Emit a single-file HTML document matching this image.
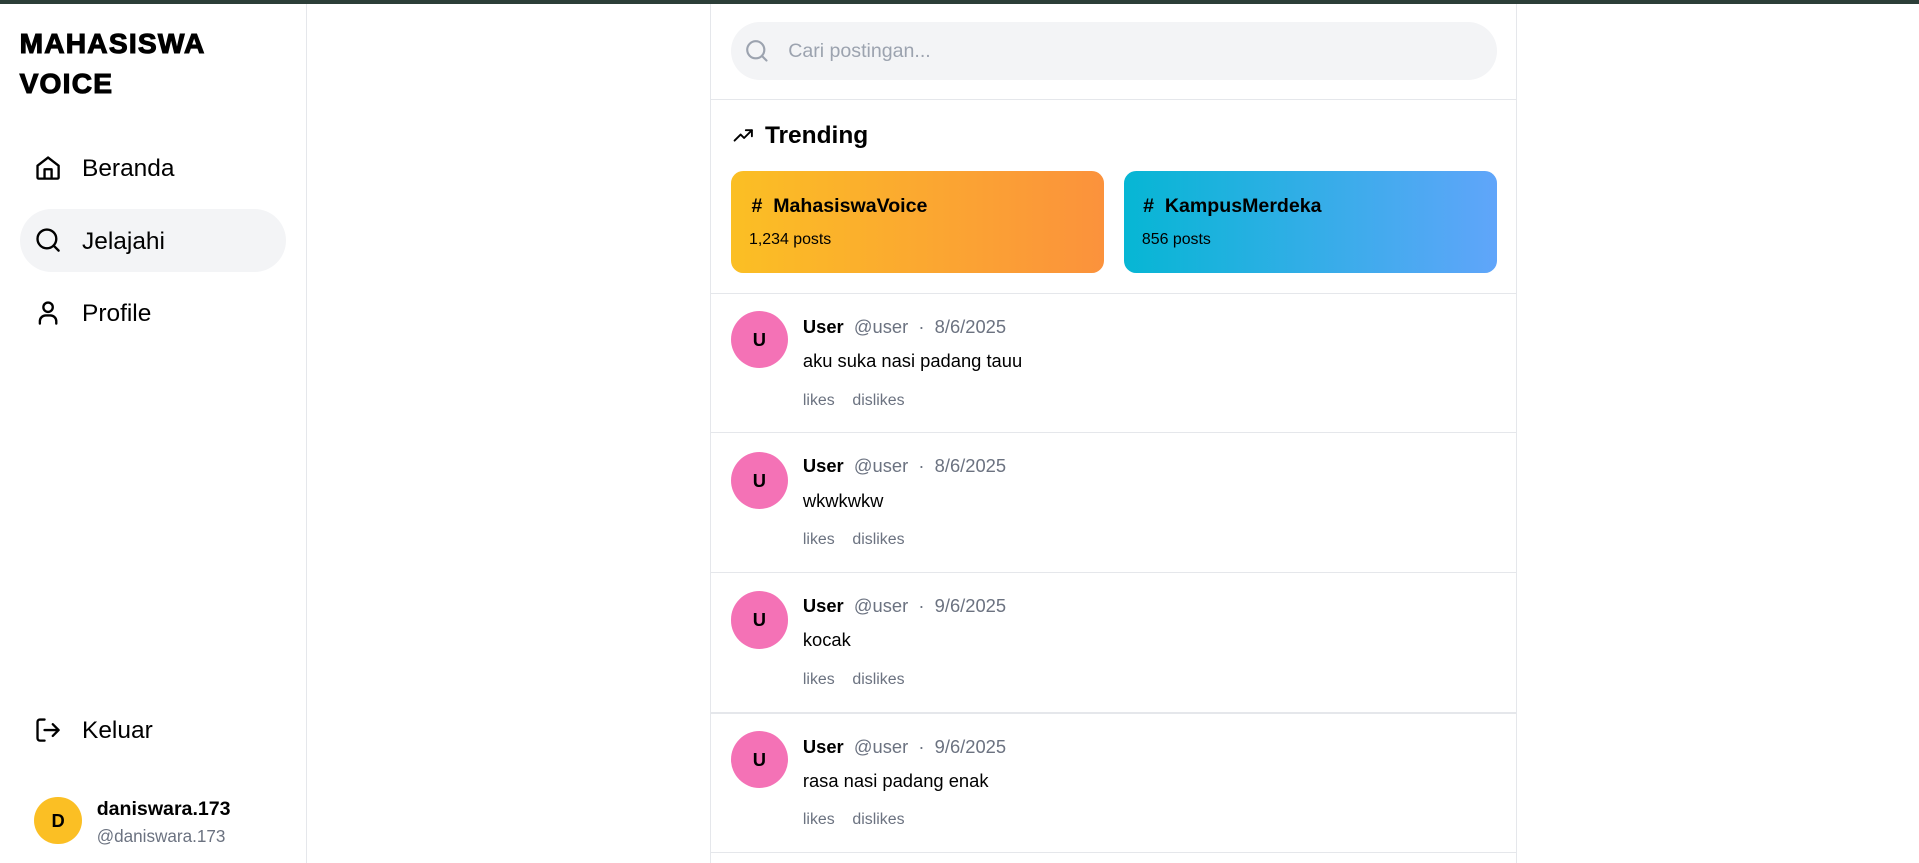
<!DOCTYPE html>
<html><head><meta charset="utf-8"><style>
html,body{margin:0;padding:0;background:#fff;overflow:hidden}
body{width:1919px;height:863px;position:relative;font-family:"Liberation Sans","DejaVu Sans",sans-serif;color:#000}
#z{zoom:1.2239;width:1568px;height:705px;position:relative}
.a{position:absolute;white-space:nowrap}
.top{position:absolute;left:0;top:0;width:1568px;height:3px;background:#2c3e38}
.side{position:absolute;left:0;top:3px;width:250px;height:702px;border-right:1px solid #e5e7eb}
.logo{left:16px;top:20px;font-size:23px;font-weight:900;line-height:32px;letter-spacing:1px;-webkit-text-stroke:0.9px #000}
.nav{font-size:20px}
.main{position:absolute;left:580px;top:3px;width:658px;height:702px;border-left:1px solid #e5e7eb;border-right:1px solid #e5e7eb}
.hr{position:absolute;left:580px;width:659px;height:1px;background:#e5e7eb}
.card{position:absolute;top:140px;width:305px;height:83px;border-radius:10px}
.av{position:absolute;left:597px;width:47px;height:47px;border-radius:50%;background:#f472b6;font-weight:bold;font-size:15px;text-align:center;line-height:47px}
.gray{color:#6b7280}
</style></head><body><div id="z">
<div class="top"></div>
<div class="side"></div>
<div class="a logo">MAHASISWA<br>VOICE</div>
<div class="a" style="left:16px;top:171px;width:218px;height:51px;border-radius:26px;background:#f3f4f6"></div>
<svg class="a" style="left:28px;top:126px" width="23" height="23" viewBox="0 0 24 24" fill="none" stroke="#000" stroke-width="2" stroke-linejoin="round"><path d="M3 10L12 3l9 7v10a1 1 0 0 1-1 1H4a1 1 0 0 1-1-1z"/><path d="M9 21v-8h6v8"/></svg>
<div class="a nav" style="left:67px;top:127px">Beranda</div>
<svg class="a" style="left:28px;top:185px" width="23" height="23" viewBox="0 0 24 24" fill="none" stroke="#000" stroke-width="2" stroke-linecap="round"><circle cx="11" cy="11" r="8"/><path d="M21 21l-4.3-4.3"/></svg>
<div class="a nav" style="left:67px;top:186px">Jelajahi</div>
<svg class="a" style="left:28px;top:244px" width="23" height="23" viewBox="0 0 24 24" fill="none" stroke="#000" stroke-width="2" stroke-linecap="round"><circle cx="12" cy="7" r="4"/><path d="M5 21v-2a5 5 0 0 1 5-5h4a5 5 0 0 1 5 5v2"/></svg>
<div class="a nav" style="left:67px;top:245px">Profile</div>
<svg class="a" style="left:28px;top:585px" width="23" height="23" viewBox="0 0 24 24" fill="none" stroke="#000" stroke-width="2" stroke-linecap="round" stroke-linejoin="round"><path d="M9 21H5a2 2 0 0 1-2-2V5a2 2 0 0 1 2-2h4"/><path d="M16 17l5-5-5-5M21 12H9"/></svg>
<div class="a nav" style="left:67px;top:586px">Keluar</div>
<div class="a" style="left:28px;top:651px;width:39px;height:39px;border-radius:50%;background:#fbbf24;text-align:center;line-height:39px;font-weight:bold;font-size:15px">D</div>
<div class="a" style="left:79px;top:652px;font-size:16px;font-weight:bold">daniswara.173</div>
<div class="a gray" style="left:79px;top:675px;font-size:14px">@daniswara.173</div>

<div class="main"></div>
<div class="a" style="left:597px;top:18px;width:626px;height:47px;border-radius:24px;background:#f3f4f6"></div>
<svg class="a" style="left:608px;top:31px" width="21" height="21" viewBox="0 0 24 24" fill="none" stroke="#9ca3af" stroke-width="2" stroke-linecap="round"><circle cx="11" cy="11" r="8"/><path d="M21 21l-4.3-4.3"/></svg>
<div class="a" style="left:644px;top:33px;font-size:16px;color:#9ca3af">Cari postingan...</div>
<div class="hr" style="top:81px"></div>
<svg class="a" style="left:597px;top:102px" width="20" height="17" viewBox="0 0 24 24" fill="none" stroke="#000" stroke-width="2.2" stroke-linecap="round" stroke-linejoin="round"><path d="M2 18l7-7 4 4 9-9"/><path d="M15 6h7v7"/></svg>
<div class="a" style="left:625px;top:100px;font-size:20px;font-weight:bold">Trending</div>
<div class="card" style="left:597px;background:linear-gradient(90deg,#fbbf24,#fb923c)"></div>
<div class="card" style="left:918px;background:linear-gradient(90deg,#06b6d4,#60a5fa)"></div>
<div class="a" style="left:614px;top:159px;font-size:16px;font-weight:bold"># &nbsp;MahasiswaVoice</div>
<div class="a" style="left:612px;top:189px;font-size:13px">1,234 posts</div>
<div class="a" style="left:934px;top:159px;font-size:16px;font-weight:bold"># &nbsp;KampusMerdeka</div>
<div class="a" style="left:933px;top:189px;font-size:13px">856 posts</div>
<div class="hr" style="top:239px"></div>

<div class="av" style="top:254px">U</div>
<div class="a" style="left:656px;top:258px;font-size:15px"><b>User</b> <span class="gray">&nbsp;@user &nbsp;· &nbsp;8/6/2025</span></div>
<div class="a" style="left:656px;top:286px;font-size:15px">aku suka nasi padang tauu</div>
<div class="a gray" style="left:656px;top:320px;font-size:13px">likes &nbsp;&nbsp;&nbsp;dislikes</div>
<div class="hr" style="top:353px"></div>

<div class="av" style="top:369px">U</div>
<div class="a" style="left:656px;top:372px;font-size:15px"><b>User</b> <span class="gray">&nbsp;@user &nbsp;· &nbsp;8/6/2025</span></div>
<div class="a" style="left:656px;top:400px;font-size:15px">wkwkwkw</div>
<div class="a gray" style="left:656px;top:434px;font-size:13px">likes &nbsp;&nbsp;&nbsp;dislikes</div>
<div class="hr" style="top:467px"></div>

<div class="av" style="top:483px">U</div>
<div class="a" style="left:656px;top:486px;font-size:15px"><b>User</b> <span class="gray">&nbsp;@user &nbsp;· &nbsp;9/6/2025</span></div>
<div class="a" style="left:656px;top:514px;font-size:15px">kocak</div>
<div class="a gray" style="left:656px;top:548px;font-size:13px">likes &nbsp;&nbsp;&nbsp;dislikes</div>
<div class="hr" style="top:582px"></div>

<div class="av" style="top:597px">U</div>
<div class="a" style="left:656px;top:601px;font-size:15px"><b>User</b> <span class="gray">&nbsp;@user &nbsp;· &nbsp;9/6/2025</span></div>
<div class="a" style="left:656px;top:629px;font-size:15px">rasa nasi padang enak</div>
<div class="a gray" style="left:656px;top:663px;font-size:13px">likes &nbsp;&nbsp;&nbsp;dislikes</div>
<div class="hr" style="top:696px"></div>
</div></body></html>
